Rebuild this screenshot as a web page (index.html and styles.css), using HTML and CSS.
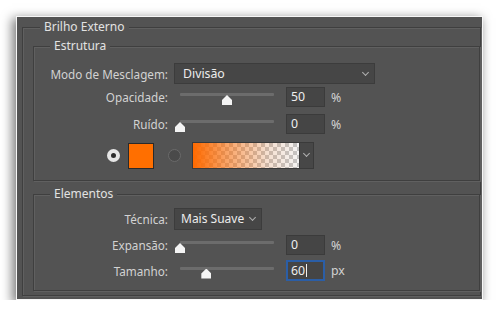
FILE: index.html
```html
<!DOCTYPE html>
<html lang="pt">
<head>
  <meta charset="UTF-8" />
  <title>Brilho Externo</title>
  <link rel="stylesheet" href="styles.css">
</head>
<body>
  <div class="dialog">
    <fieldset class="group">
      <legend>Brilho Externo</legend>

      <fieldset class="sub estrutura">
        <legend>Estrutura</legend>
        <div class="row row-mode">
          <label class="lbl">Modo de Mesclagem:</label>
          <div class="select mode">Divisão<span class="chev"></span></div>
        </div>
        <div class="row row-opacity">
          <label class="lbl">Opacidade:</label>
          <div class="slider"><div class="track"><div class="thumb" style="left: 50%"></div></div></div>
          <div class="num">50</div>
          <span class="unit">%</span>
        </div>
        <div class="row row-noise">
          <label class="lbl">Ruído:</label>
          <div class="slider"><div class="track"><div class="thumb" style="left: 0%"></div></div></div>
          <div class="num">0</div>
          <span class="unit">%</span>
        </div>
        <div class="row row-color">
          <span class="radio on"></span>
          <span class="swatch"></span>
          <span class="radio"></span>
          <div class="gradient"><span class="grad-fill"></span><span class="grad-btn"><span class="chev"></span></span></div>
        </div>
      </fieldset>

      <fieldset class="sub elementos">
        <legend>Elementos</legend>
        <div class="row row-tech">
          <label class="lbl">Técnica:</label>
          <div class="select tech">Mais Suave<span class="chev"></span></div>
        </div>
        <div class="row row-spread">
          <label class="lbl">Expansão:</label>
          <div class="slider"><div class="track"><div class="thumb" style="left: 0%"></div></div></div>
          <div class="num">0</div>
          <span class="unit">%</span>
        </div>
        <div class="row row-size">
          <label class="lbl">Tamanho:</label>
          <div class="slider"><div class="track"><div class="thumb" style="left: 28%"></div></div></div>
          <div class="num active">60<span class="caret"></span></div>
          <span class="unit">px</span>
        </div>
      </fieldset>
    </fieldset>
  </div>
</body>
</html>
```

FILE: styles.css
```css
html, body {
  margin: 0;
  padding: 0;
  background: #fff;
  font-family: 'Noto Sans', 'Open Sans', sans-serif;
  font-size: 12px;
  color: #d2d2d2;
}
.dialog {
  margin: 16px 17px 0 16px;
  height: 280px;
  padding: 2px 1px 0 5px;
  background: #535353;
  border: 1px solid #f6f6f6;
  box-shadow: -3px 3px 10px 1px rgba(0, 0, 0, 0.5);
  overflow: hidden;
}
fieldset {
  margin: 0;
  padding: 0;
  min-width: 0;
  border: 1px solid #3f3f3f;
  box-shadow: inset 1px 1px 0 #606060, 1px 1px 0 #606060;
}
legend {
  padding: 0 4px;
  line-height: 16px;
  background: #535353;
  color: #e2e2e2;
}
.group {
  padding-bottom: 4px;
}
.group > legend {
  margin-left: 17px;
}
.sub {
  margin: 3px 0 0 10px;
}
.sub > legend {
  margin-left: 16px;
}
.estrutura {
  padding: 9px 0 11px 0;
}
.elementos {
  margin-top: 5px;
  padding: 6px 0 9px 0;
}
.row {
  display: flex;
  align-items: center;
}
.lbl {
  width: 134px;
  margin-right: 6px;
  text-align: right;
  white-space: nowrap;
  font-size: 11.7px;
}
.row-opacity { margin-top: 3px; }
.row-noise { margin-top: 7px; }
.row-color { margin-top: 8px; }
.row-spread { margin-top: 5px; }
.row-size { margin-top: 5px; }

.select {
  position: relative;
  box-sizing: border-box;
  height: 21px;
  line-height: 19px;
  padding-left: 8px;
  background: #464646;
  border: 1px solid #3c3c3c;
  color: #ececec;
  font-size: 12.3px;
}
.select.mode { width: 201px; }
.select.tech { width: 88px; height: 22px; line-height: 20px; padding-left: 6px; font-size: 12px; }
.chev {
  position: absolute;
  right: 6px;
  top: 6px;
  width: 4px;
  height: 4px;
  border-right: 1px solid #b0b0b0;
  border-bottom: 1px solid #b0b0b0;
  transform: rotate(45deg);
}
.slider {
  width: 106px;
  height: 20px;
  margin-right: 6px;
}
.track {
  position: relative;
  height: 3px;
  margin: 6px 6px 0;
  background: #6c6c6c;
  border-radius: 1px;
}
.thumb {
  position: absolute;
  top: 2px;
  width: 10px;
  height: 10px;
  margin-left: -5px;
  background: #f4f4f4;
  clip-path: polygon(50% 0, 100% 50%, 100% 100%, 0 100%, 0 50%);
}
.num {
  box-sizing: border-box;
  width: 39px;
  height: 20px;
  line-height: 18px;
  padding-left: 4px;
  background: #454545;
  border: 1px solid #3b3b3b;
  color: #efefef;
  font-size: 12.3px;
}
.num.active {
  height: 21px;
  border: 2px solid #2b5ea6;
  padding-left: 3px;
  line-height: 17px;
}
.caret {
  display: inline-block;
  width: 1px;
  height: 13px;
  margin-left: 1px;
  vertical-align: -2px;
  background: #f0f0f0;
}
.unit {
  margin-left: 6px;
  color: #d2d2d2;
  font-size: 12.3px;
}
.radio {
  box-sizing: border-box;
  width: 13px;
  height: 13px;
  border-radius: 50%;
  border: 1px solid #6a6a6a;
  background: #4a4a4a;
}
.radio.on {
  margin-left: 73px;
  border: 4px solid #e6e6e6;
  background: #2c2c2c;
}
.swatch {
  box-sizing: border-box;
  width: 26px;
  height: 26px;
  margin: 0 14px 0 8px;
  background: #ff6f00;
  border: 1px solid #2a2a2a;
}
.gradient {
  display: flex;
  height: 25px;
  margin-left: 11px;
  border: 1px solid #3a3a3a;
}
.grad-fill {
  width: 106px;
  background:
    linear-gradient(to right, #ff6a00 0%, rgba(255, 106, 0, 0.6) 30%, rgba(255, 106, 0, 0.15) 70%, rgba(255, 106, 0, 0) 100%),
    repeating-conic-gradient(#c4c4c4 0 25%, #f4f4f4 0 50%) 0 0 / 8px 8px;
}
.grad-btn {
  position: relative;
  width: 13px;
  background: #474747;
  border-left: 1px solid #3a3a3a;
}
.grad-btn .chev {
  right: 4px;
  top: 8px;
}
```
